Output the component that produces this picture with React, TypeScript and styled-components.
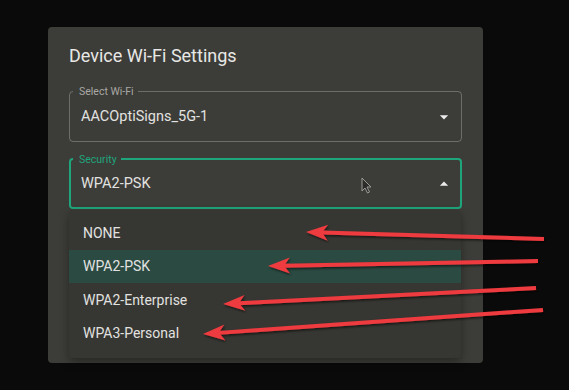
import styled, { createGlobalStyle } from 'styled-components';

const GlobalStyle = createGlobalStyle`
	html, body {
		margin: 0;
		padding: 0;
		background: #0a0a0a;
	}
	body {
		font-family: Roboto, 'Liberation Sans', Arial, sans-serif;
	}
`;

const options = ['NONE', 'WPA2-PSK', 'WPA2-Enterprise', 'WPA3-Personal'];

const arrows = [
	{ tail: [544, 239], tip: [306, 232] },
	{ tail: [538, 261], tip: [268, 266] },
	{ tail: [536, 288], tip: [223, 304] },
	{ tail: [543, 310], tip: [203, 334] },
];

function Arrow({ tail, tip }: { tail: number[]; tip: number[] }) {
	const dx = tip[0] - tail[0];
	const dy = tip[1] - tail[1];
	const len = Math.hypot(dx, dy);
	const ux = dx / len;
	const uy = dy / len;
	const nx = -uy;
	const ny = ux;
	const L = 22;
	const W = 8;
	const notch = 16;
	const back = [tip[0] - ux * notch, tip[1] - uy * notch];
	const pts = [
		tip,
		[tip[0] - ux * L + nx * W, tip[1] - uy * L + ny * W],
		back,
		[tip[0] - ux * L - nx * W, tip[1] - uy * L - ny * W],
	]
		.map((p) => p.join(','))
		.join(' ');
	return (
		<g>
			<line
				x1={tail[0]}
				y1={tail[1]}
				x2={back[0]}
				y2={back[1]}
				stroke="#ee3b3f"
				strokeWidth={4}
			/>
			<polygon points={pts} fill="#ee3b3f" />
		</g>
	);
}

function DropIcon({ up }: { up?: boolean }) {
	return (
		<StyledIcon viewBox="0 0 24 24" width={20} height={20}>
			<path d={up ? 'M7 14l5-5 5 5z' : 'M7 10l5 5 5-5z'} fill="#ececec" />
		</StyledIcon>
	);
}

export default function App() {
	return (
		<>
			<GlobalStyle />
			<StyledStage>
				<StyledPanel>
					<StyledTitle>Device Wi-Fi Settings</StyledTitle>
					<StyledField>
						<StyledLabel>Select Wi-Fi</StyledLabel>
						<StyledValue>AACOptiSigns_5G-1</StyledValue>
						<DropIcon />
					</StyledField>
					<StyledFieldWrap>
						<StyledField focused>
							<StyledLabel focused>Security</StyledLabel>
							<StyledValue>WPA2-PSK</StyledValue>
							<DropIcon up />
						</StyledField>
						<StyledMenu>
							{options.map((opt) => (
								<StyledMenuItem key={opt} selected={opt === 'WPA2-PSK'}>
									{opt}
								</StyledMenuItem>
							))}
						</StyledMenu>
					</StyledFieldWrap>
				</StyledPanel>

				<StyledOverlay viewBox="0 0 569 390" width={569} height={390}>
					<defs>
						<filter id="sh" x="-5%" y="-50%" width="110%" height="200%">
							<feDropShadow dx="1" dy="1.5" stdDeviation="1" floodColor="#000" floodOpacity="0.6" />
						</filter>
					</defs>
					<g filter="url(#sh)">
						{arrows.map((a, i) => (
							<Arrow key={i} tail={a.tail} tip={a.tip} />
						))}
					</g>
					<path
						d="M362 178 L362 191 L365 188 L367.5 193 L369.5 192 L367 187 L371 187 Z"
						fill="#2c2c2a"
						stroke="#9a9a96"
						strokeWidth={1}
						strokeLinejoin="round"
					/>
				</StyledOverlay>
			</StyledStage>
		</>
	);
}

const StyledStage = styled.div`
	position: relative;
	width: 569px;
	height: 390px;
	padding-top: 27px;
	box-sizing: border-box;
	overflow: hidden;
`;

const StyledPanel = styled.div`
	margin-left: 48px;
	width: 435px;
	height: 336px;
	box-sizing: border-box;
	padding: 17px 21px 0;
	background: #3c3c38;
	border-radius: 4px;
	display: flex;
	flex-direction: column;
	gap: 16px;
`;

const StyledTitle = styled.h2`
	margin: 0 0 7px;
	font-size: 18px;
	line-height: 24px;
	font-weight: 400;
	color: #e8e8e6;
`;

const StyledFieldWrap = styled.div`
	position: relative;
`;

const StyledField = styled.div<{ focused?: boolean }>`
	position: relative;
	height: 51px;
	box-sizing: border-box;
	display: flex;
	align-items: center;
	justify-content: space-between;
	border: ${({ focused }) =>
		focused ? '2px solid #1fa57c' : '1px solid rgba(255, 255, 255, 0.25)'};
	border-radius: 4px;
	padding: 0 ${({ focused }) => (focused ? 6 : 7)}px 0
		${({ focused }) => (focused ? 10 : 11)}px;
`;

const StyledLabel = styled.span<{ focused?: boolean }>`
	position: absolute;
	top: -7px;
	left: ${({ focused }) => (focused ? 2 : 3)}px;
	padding: 0 4px 0 6px;
	font-size: 10.5px;
	line-height: 13px;
	background: #3c3c38;
	color: ${({ focused }) => (focused ? '#1fa57c' : '#a9a9a5')};
`;

const StyledValue = styled.span`
	font-size: 14.5px;
	color: #e2e2e0;
`;

const StyledIcon = styled.svg`
	display: block;
`;

const StyledMenu = styled.ul`
	position: absolute;
	top: 52px;
	left: 0;
	width: 392px;
	margin: 0;
	padding: 6px 0 8px;
	list-style: none;
	background: #363632;
	border-radius: 4px;
	box-shadow: 0 4px 10px rgba(0, 0, 0, 0.35);
`;

const StyledMenuItem = styled.li<{ selected?: boolean }>`
	height: 33.5px;
	display: flex;
	align-items: center;
	padding: 0 14px;
	font-size: 14px;
	color: #e2e2e0;
	background: ${({ selected }) => (selected ? '#2b4a42' : 'transparent')};
`;

const StyledOverlay = styled.svg`
	position: absolute;
	left: 0;
	top: 0;
	pointer-events: none;
`;
